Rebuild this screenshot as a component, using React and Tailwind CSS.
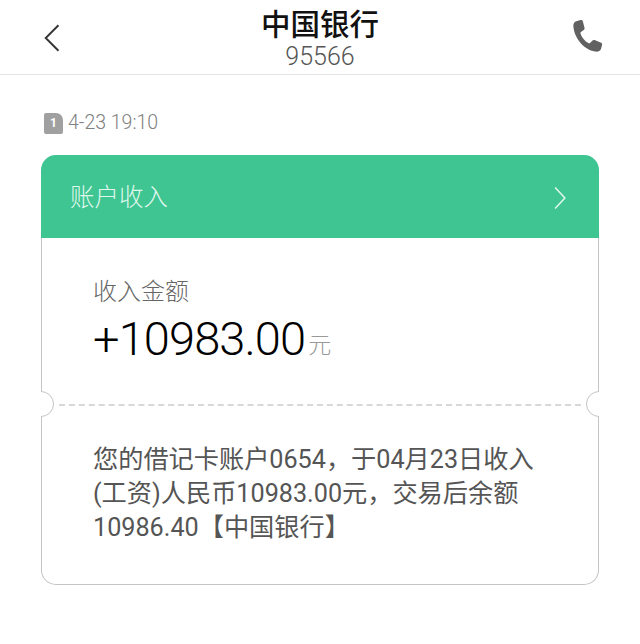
import React from 'react';

const CJK = 'font-["Roboto","Noto_Sans_CJK_SC",sans-serif]';

function Chevron({ dir, className }) {
  return (
    <svg viewBox="0 0 20 34" fill="none" stroke="currentColor" strokeWidth="2.2" className={className}>
      <path d={dir === 'left' ? 'M17 2 2 17l15 15' : 'M3 2l14 15L3 32'} />
    </svg>
  );
}

function PhoneIcon() {
  return (
    <svg viewBox="0 0 24 24" className="h-[39px] w-[39px] text-[#616161]" fill="currentColor">
      <path d="M6.2 1.9 8.4 1.3c.6-.2 1.100.1 1.300.6l1.100 4.300c.1.500 0 .9-.5 1.200L8.600 8.600c-.3.200-.4.500-.3.900.8 2.500 2.600 4.700 5 6 .3.200.7.100.9-.1l1.500-1.500c.4-.4.800-.5 1.300-.3l4 1.700c.5.200.7.700.6 1.200l-.6 2.300c-.3 1.100-1.200 1.900-2.400 1.900C11.700 20.700 4.200 13 3.900 4.600c0-1.300.9-2.400 2.300-2.700Z" />
    </svg>
  );
}

function SimBadge() {
  return (
    <span className="flex h-[21px] w-[19px] items-center justify-center rounded-[2px] rounded-tr-[7px] bg-[#a0a0a0] text-[12px] font-bold leading-none text-white">
      1
    </span>
  );
}

function Notch({ side }) {
  return (
    <div
      className={
        side === 'left'
          ? 'absolute left-0 top-[-13px] h-[26px] w-[13px] overflow-hidden'
          : 'absolute right-0 top-[-13px] h-[26px] w-[13px] overflow-hidden'
      }
    >
      <div
        className={
          side === 'left'
            ? 'absolute left-[-13px] top-0 h-[26px] w-[26px] rounded-full border border-[#c4c4c4] bg-white'
            : 'absolute right-[-13px] top-0 h-[26px] w-[26px] rounded-full border border-[#c4c4c4] bg-white'
        }
      />
    </div>
  );
}

export default function App() {
  return (
    <div className={`h-[644px] w-[640px] overflow-hidden bg-white ${CJK}`}>
      {/* Header */}
      <header className="grid h-[75px] grid-cols-[1fr_auto_1fr] items-center border-b border-[#e4e4e4] px-[44px]">
        <Chevron dir="left" className="mt-[2px] h-[34px] w-[17px] text-[#333]" />
        <div className="flex flex-col items-center pt-[4px]">
          <h1 className="h-[34px] text-[29.500px] font-medium leading-[34px] text-[#111]">中国银行</h1>
          <p className="mt-[1px] text-[25px] font-light leading-[28px] text-[#555]">95566</p>
        </div>
        <div className="mr-[-10px] flex justify-end">
          <PhoneIcon />
        </div>
      </header>

      <main className="px-[41px] pt-[36px]">
        <div className="flex h-[24px] items-center gap-[5px] pl-[3px] text-[#808080]">
          <SimBadge />
          <span className="text-[19.500px] font-light leading-[24px]">4-23 19:10</span>
        </div>

        {/* Card */}
        <section className="mt-[20px] w-[558px]">
          <div className="flex h-[83px] items-center justify-between rounded-t-[15px] bg-[#3fc592] pl-[29px] pr-[32px] pt-[3px] text-[#dff7ec]">
            <span className="text-[24.500px] font-light leading-none">账户收入</span>
            <Chevron dir="right" className="h-[24px] w-[14px]" />
          </div>

          <div className="h-[166px] border-x border-[#c4c4c4] pl-[51px] pt-[40px]">
            <p className="text-[24px] font-light leading-[28px] text-[#666]">收入金额</p>
            <p className="mt-[6px] flex items-baseline text-[47px] font-light leading-[54px] tracking-[-0.900px] text-black">
              +10983.00
              <span className="ml-[3px] -translate-y-[2px] text-[23px] tracking-normal text-[#999]">元</span>
            </p>
          </div>

          <div className="relative h-[1px]">
            <div className="mx-[18px] border-t-2 border-dashed border-[#d8d8d8]" />
            <Notch side="left" />
            <Notch side="right" />
          </div>

          <div className="h-[180px] rounded-b-[15px] border-x border-b border-[#c4c4c4] pl-[51px] pr-[30px] pt-[38px]">
            <p className="text-[25.200px] leading-[34px] text-[#555]">
              您的借记卡账户0654，于04月23日收入
              <br />
              (工资)人民币10983.00元，交易后余额
              <br />
              10986.40【中国银行】
            </p>
          </div>
        </section>
      </main>
    </div>
  );
}
